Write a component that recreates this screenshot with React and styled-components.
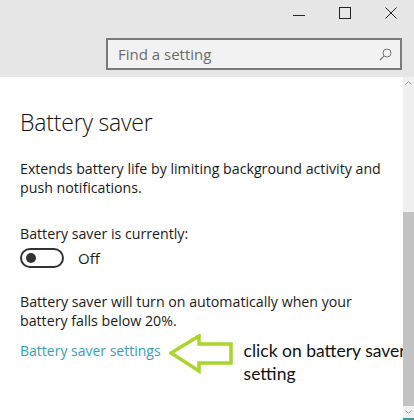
import React from 'react';
import styled, { createGlobalStyle } from 'styled-components';

const Global = createGlobalStyle`
  html, body {
    margin: 0;
    padding: 0;
    background: #ffffff;
  }
`;

const Window = styled.div`
  width: 414px;
  height: 420px;
  overflow: hidden;
  display: flex;
  flex-direction: column;
  font-family: "Open Sans", "Noto Sans", sans-serif;
  color: #1a1a1a;
  background: #fff;
`;

const Header = styled.header`
  height: 77px;
  flex: none;
  background: #e6e6e6;
  display: flex;
  flex-direction: column;
`;

const TitleBar = styled.div`
  height: 30px;
  display: flex;
  justify-content: flex-end;
`;

const WinButton = styled.div`
  width: 46px;
  height: 30px;
  display: flex;
  align-items: center;
  justify-content: center;
  margin-top: -2px;
`;

const SearchRow = styled.div`
  display: flex;
  justify-content: flex-end;
  padding: 8px 12px 0 0;
`;

const SearchBox = styled.div`
  width: 296px;
  height: 32px;
  box-sizing: border-box;
  border: 2px solid #7a7a7a;
  background: #f2f2f2;
  display: flex;
  align-items: center;
  justify-content: space-between;
  padding: 0 8px 0 10px;
`;

const Placeholder = styled.span`
  font-size: 15px;
  color: #6b6b6b;
`;

const Body = styled.div`
  flex: 1;
  display: flex;
  min-height: 0;
`;

const Content = styled.main`
  flex: 1;
  min-width: 0;
  padding: 28px 0 0 20px;
`;

const Title = styled.h1`
  margin: 0;
  font-size: 23px;
  font-weight: 300;
  line-height: 34px;
  letter-spacing: -0.2px;
  color: #111;
`;

const Text = styled.p`
  margin: ${p => p.$mt || 0}px 0 0;
  font-size: 14.2px;
  line-height: 19px;
  color: #1a1a1a;
  width: 370px;
`;

const ToggleRow = styled.div`
  display: flex;
  align-items: center;
  gap: 14px;
  margin-top: 5px;
`;

const Toggle = styled.div`
  width: 44px;
  height: 20px;
  box-sizing: border-box;
  border: 2px solid #333;
  border-radius: 10px;
  display: flex;
  align-items: center;
  padding-left: 4px;
`;

const Knob = styled.span`
  width: 10px;
  height: 10px;
  border-radius: 50%;
  background: #333;
`;

const State = styled.span`
  font-size: 15px;
  color: #1a1a1a;
`;

const LinkRow = styled.div`
  display: flex;
  align-items: flex-start;
  margin-top: 4px;
`;

const Link = styled.a`
  font-size: 14px;
  line-height: 22px;
  color: #3a9eb2;
  text-decoration: none;
  margin-top: 6px;
  white-space: nowrap;
`;

const Arrow = styled.svg`
  flex: none;
  margin-left: 8px;
`;

const Note = styled.div`
  font-family: Lato, "Open Sans", sans-serif;
  font-size: 17.5px;
  line-height: 23px;
  color: #111;
  margin: 5px 0 0 9px;
  white-space: nowrap;
  flex: none;
`;

const Scrollbar = styled.div`
  width: 11px;
  flex: none;
  background: #f0f0f0;
  display: flex;
  flex-direction: column;
  align-items: center;
  border-bottom: 2px solid #3f9a9c;
`;

const ScrollArrow = styled.svg`
  flex: none;
  margin: 4px 0;
`;

const Thumb = styled.div`
  width: 11px;
  height: 194px;
  margin-top: 123px;
  background: #c2c2c2;
`;

const Spacer = styled.div`
  flex: 1;
`;

export default function App() {
  return (
    <>
      <Global />
      <Window>
        <Header>
          <TitleBar>
            <WinButton>
              <svg width="12" height="12" viewBox="0 0 12 12"><path d="M0 8.5h12" stroke="#222" strokeWidth="1" /></svg>
            </WinButton>
            <WinButton>
              <svg width="12" height="12" viewBox="0 0 12 12"><rect x="0.5" y="0.5" width="11" height="11" fill="none" stroke="#222" strokeWidth="1" /></svg>
            </WinButton>
            <WinButton>
              <svg width="12" height="12" viewBox="0 0 12 12"><path d="M0.5 0.5l11 11M11.5 0.5l-11 11" stroke="#222" strokeWidth="1" /></svg>
            </WinButton>
          </TitleBar>
          <SearchRow>
            <SearchBox>
              <Placeholder>Find a setting</Placeholder>
              <svg width="13" height="13" viewBox="0 0 13 13">
                <circle cx="8" cy="5" r="4" fill="none" stroke="#777" strokeWidth="1" />
                <path d="M5.2 7.8L1 12" stroke="#777" strokeWidth="1.2" />
              </svg>
            </SearchBox>
          </SearchRow>
        </Header>
        <Body>
          <Content>
            <Title>Battery saver</Title>
            <Text $mt={20}>Extends battery life by limiting background activity and push notifications.</Text>
            <Text $mt={27}>Battery saver is currently:</Text>
            <ToggleRow>
              <Toggle><Knob /></Toggle>
              <State>Off</State>
            </ToggleRow>
            <Text $mt={24}>Battery saver will turn on automatically when your battery falls below 20%.</Text>
            <LinkRow>
              <Link href="#">Battery saver settings</Link>
              <Arrow width="66" height="40" viewBox="0 0 66 40">
                <path d="M2 19 L30 2 L30 10 L62 10 L62 29 L30 29 L30 37 Z" fill="none" stroke="#abd52a" strokeWidth="3.5" strokeLinejoin="miter" />
              </Arrow>
              <Note>click on battery saver<br />setting</Note>
            </LinkRow>
          </Content>
          <Scrollbar>
            <ScrollArrow width="7" height="4" viewBox="0 0 7 4"><path d="M0.5 3.5L3.5 0.5L6.5 3.5" fill="none" stroke="#999" /></ScrollArrow>
            <Thumb />
            <Spacer />
            <ScrollArrow width="7" height="4" viewBox="0 0 7 4"><path d="M0.5 0.5L3.5 3.5L6.5 0.5" fill="none" stroke="#999" /></ScrollArrow>
          </Scrollbar>
        </Body>
      </Window>
    </>
  );
}
